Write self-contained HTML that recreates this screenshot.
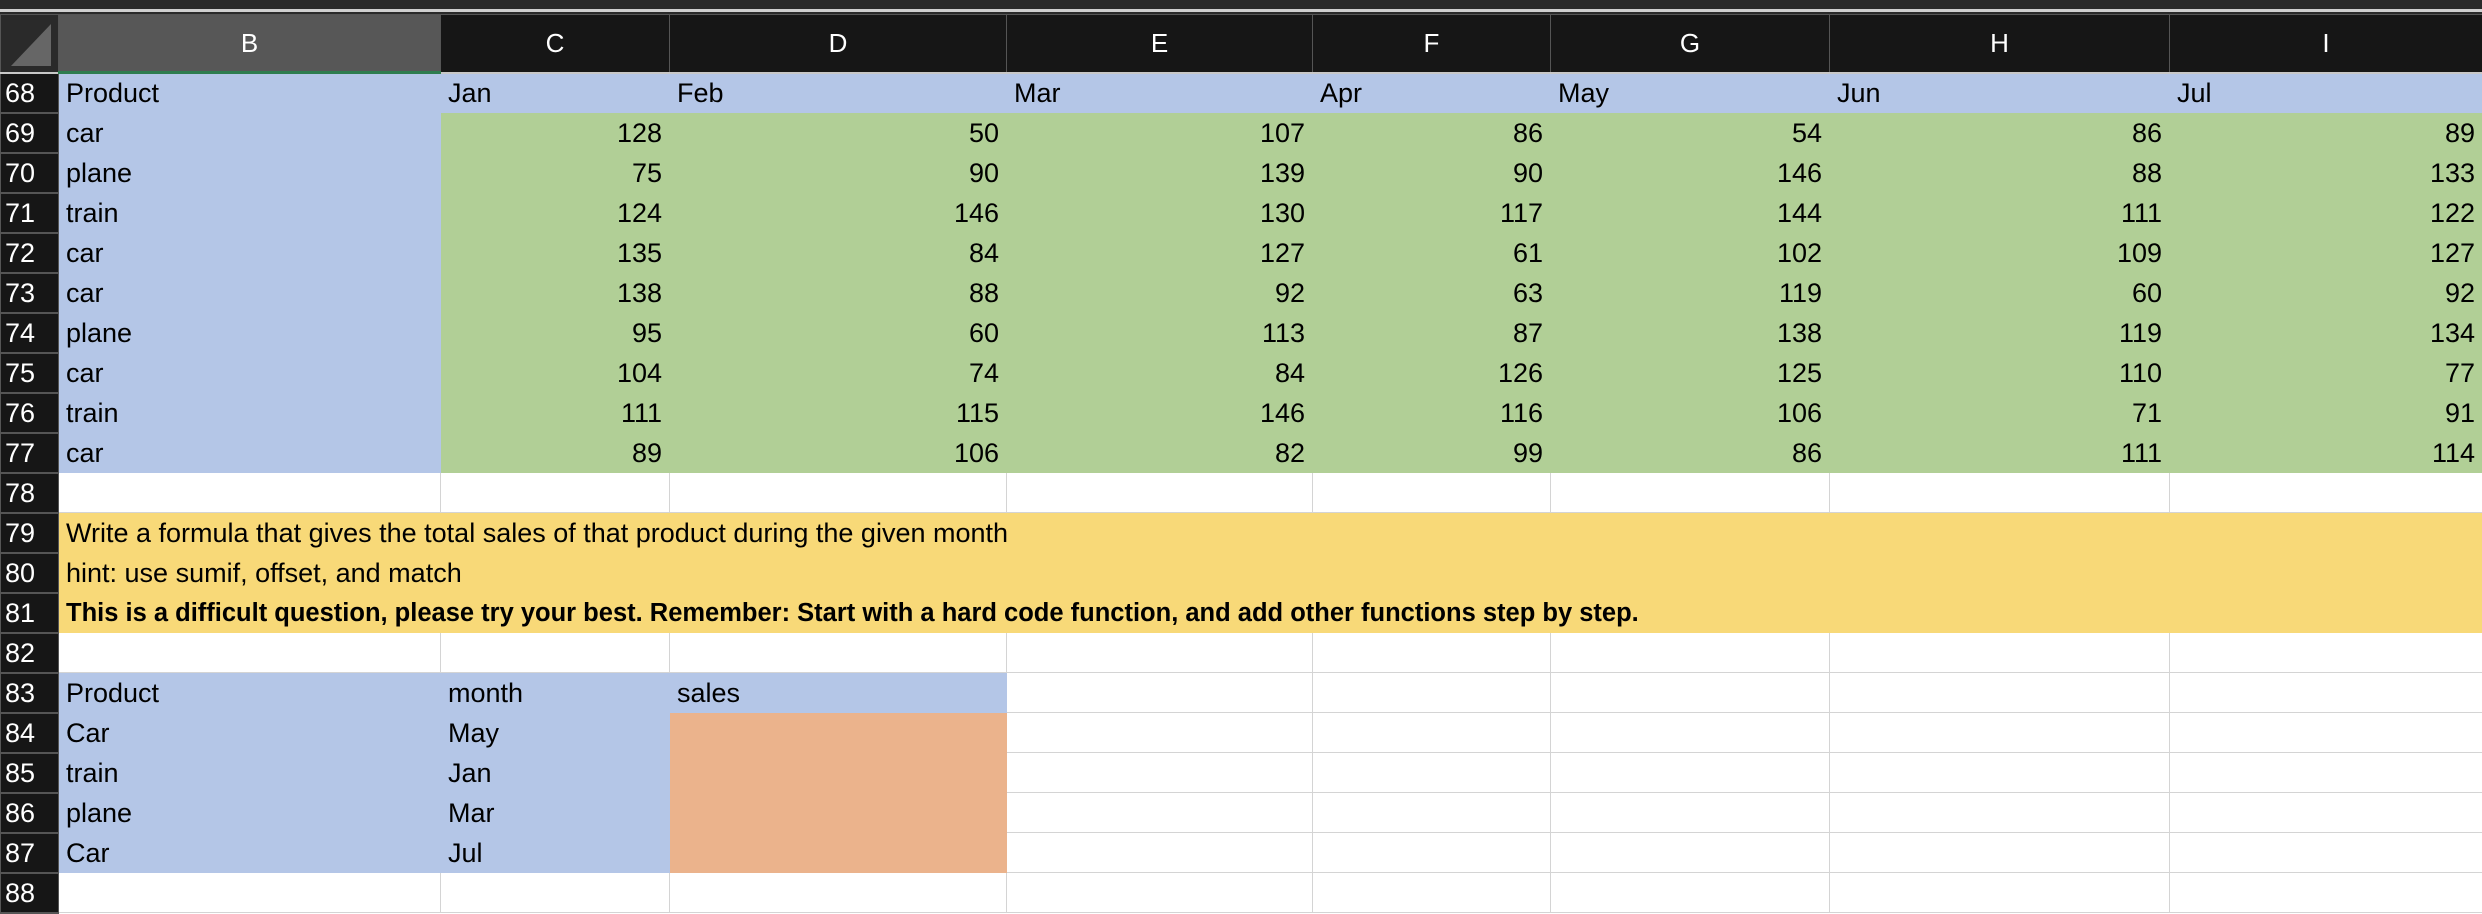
<!DOCTYPE html>
<html><head><meta charset="utf-8"><style>
html,body{margin:0;padding:0;background:#fff;width:2482px;height:908px;overflow:hidden}
.top{position:absolute;left:0;top:0;width:2482px;height:14px;background:#2a2a2a}
.top .ln{position:absolute;left:0;top:9px;width:2482px;height:3px;background:#cfcfcf}
table{position:absolute;left:0;top:14px;border-collapse:collapse;table-layout:fixed;width:2482px;font-family:"Liberation Sans",sans-serif;font-size:27px;color:#000}
tr{height:40px}
tr.h{height:58px}
td{padding:0 7px;border:1px solid #d4d4d4;white-space:nowrap;overflow:visible;line-height:36px;box-sizing:border-box}
tr.h td{background:#161616;color:#fff;text-align:center;border:1px solid #555;border-bottom:2px solid #c8c8c8;font-size:26px}
tr.h td.b{background:#575757;border-bottom:3px solid #2e7d4f}
td.n{background:#161616;color:#fff;border:1px solid #555;border-bottom:2px solid #555;padding:0 4px;text-align:left;font-size:27px}
.bl{background:#b4c6e7;border-color:#b4c6e7}
.gr{background:#b1cf96;border-color:#b1cf96;text-align:right}
.ye{background:#f8d978;border-color:#f8d978}
.or{background:#ebb38c;border-color:#ebb38c}
.bd{font-weight:bold;font-size:25.5px}
</style></head><body>
<div class="top"><div class="ln"></div></div>
<table>
<colgroup><col style="width:58px"><col style="width:382px"><col style="width:229px"><col style="width:337px"><col style="width:306px"><col style="width:238px"><col style="width:279px"><col style="width:340px"><col style="width:313px"></colgroup>
<tr class="h"><td style="background:#2a2a2a;padding:0"><svg width="56" height="54" style="display:block"><polygon points="10,50 50,50 50,8" fill="#666"/></svg></td><td class="b">B</td><td>C</td><td>D</td><td>E</td><td>F</td><td>G</td><td>H</td><td>I</td></tr>
<tr><td class="n">68</td><td class="bl">Product</td><td class="bl">Jan</td><td class="bl">Feb</td><td class="bl">Mar</td><td class="bl">Apr</td><td class="bl">May</td><td class="bl">Jun</td><td class="bl">Jul</td></tr>
<tr><td class="n">69</td><td class="bl">car</td><td class="gr">128</td><td class="gr">50</td><td class="gr">107</td><td class="gr">86</td><td class="gr">54</td><td class="gr">86</td><td class="gr">89</td></tr>
<tr><td class="n">70</td><td class="bl">plane</td><td class="gr">75</td><td class="gr">90</td><td class="gr">139</td><td class="gr">90</td><td class="gr">146</td><td class="gr">88</td><td class="gr">133</td></tr>
<tr><td class="n">71</td><td class="bl">train</td><td class="gr">124</td><td class="gr">146</td><td class="gr">130</td><td class="gr">117</td><td class="gr">144</td><td class="gr">111</td><td class="gr">122</td></tr>
<tr><td class="n">72</td><td class="bl">car</td><td class="gr">135</td><td class="gr">84</td><td class="gr">127</td><td class="gr">61</td><td class="gr">102</td><td class="gr">109</td><td class="gr">127</td></tr>
<tr><td class="n">73</td><td class="bl">car</td><td class="gr">138</td><td class="gr">88</td><td class="gr">92</td><td class="gr">63</td><td class="gr">119</td><td class="gr">60</td><td class="gr">92</td></tr>
<tr><td class="n">74</td><td class="bl">plane</td><td class="gr">95</td><td class="gr">60</td><td class="gr">113</td><td class="gr">87</td><td class="gr">138</td><td class="gr">119</td><td class="gr">134</td></tr>
<tr><td class="n">75</td><td class="bl">car</td><td class="gr">104</td><td class="gr">74</td><td class="gr">84</td><td class="gr">126</td><td class="gr">125</td><td class="gr">110</td><td class="gr">77</td></tr>
<tr><td class="n">76</td><td class="bl">train</td><td class="gr">111</td><td class="gr">115</td><td class="gr">146</td><td class="gr">116</td><td class="gr">106</td><td class="gr">71</td><td class="gr">91</td></tr>
<tr><td class="n">77</td><td class="bl">car</td><td class="gr">89</td><td class="gr">106</td><td class="gr">82</td><td class="gr">99</td><td class="gr">86</td><td class="gr">111</td><td class="gr">114</td></tr>
<tr><td class="n">78</td><td></td><td></td><td></td><td></td><td></td><td></td><td></td><td></td></tr>
<tr><td class="n">79</td><td class="ye" colspan="8">Write a formula that gives the total sales of that product during the given month</td></tr>
<tr><td class="n">80</td><td class="ye" colspan="8">hint: use sumif, offset, and match</td></tr>
<tr><td class="n">81</td><td class="ye bd" colspan="8">This is a difficult question, please try your best. Remember: Start with a hard code function, and add other functions step by step.</td></tr>
<tr><td class="n">82</td><td></td><td></td><td></td><td></td><td></td><td></td><td></td><td></td></tr>
<tr><td class="n">83</td><td class="bl">Product</td><td class="bl">month</td><td class="bl">sales</td><td></td><td></td><td></td><td></td><td></td></tr>
<tr><td class="n">84</td><td class="bl">Car</td><td class="bl">May</td><td class="or"></td><td></td><td></td><td></td><td></td><td></td></tr>
<tr><td class="n">85</td><td class="bl">train</td><td class="bl">Jan</td><td class="or"></td><td></td><td></td><td></td><td></td><td></td></tr>
<tr><td class="n">86</td><td class="bl">plane</td><td class="bl">Mar</td><td class="or"></td><td></td><td></td><td></td><td></td><td></td></tr>
<tr><td class="n">87</td><td class="bl">Car</td><td class="bl">Jul</td><td class="or"></td><td></td><td></td><td></td><td></td><td></td></tr>
<tr><td class="n">88</td><td></td><td></td><td></td><td></td><td></td><td></td><td></td><td></td></tr>
</table>
</body></html>
